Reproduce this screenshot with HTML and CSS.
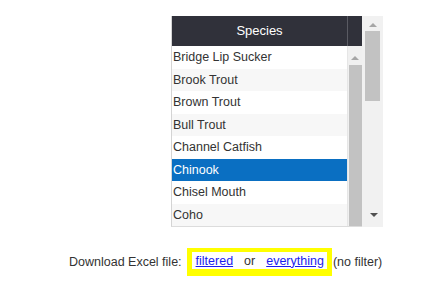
FILE: index.html
```html
<!DOCTYPE html>
<html lang="en">
<head>
  <meta charset="UTF-8" />
  <title>Species download</title>
  <link rel="stylesheet" href="styles.css">
</head>
<body>
  <div class="panel">
    <div class="grid">
      <div class="head">
        <div class="head-title">Species</div>
        <div class="head-gap"></div>
      </div>
      <div class="body">
        <ul class="rows">
          <li>Bridge Lip Sucker</li>
          <li class="alt">Brook Trout</li>
          <li>Brown Trout</li>
          <li class="alt">Bull Trout</li>
          <li>Channel Catfish</li>
          <li class="selected">Chinook</li>
          <li>Chisel Mouth</li>
          <li class="alt">Coho</li>
        </ul>
        <div class="inner-bar">
          <span class="arrow up"></span>
          <div class="inner-thumb"></div>
        </div>
      </div>
    </div>
    <div class="outer-bar">
      <span class="arrow up"></span>
      <div class="outer-thumb"></div>
      <div class="spacer"></div>
      <span class="arrow down"></span>
    </div>
  </div>

  <div class="download">
    <span class="label">Download Excel file:</span>
    <span class="highlight">
      <a href="#" class="first">filtered</a>
      <span class="or">or</span>
      <a href="#">everything</a>
    </span>
    <span class="note">(no filter)</span>
  </div>
</body>
</html>
```

FILE: styles.css
```css
body {
  margin: 0;
  background: #fff;
  font-family: "Liberation Sans", Arial, sans-serif;
  font-size: 12.5px;
  color: #333;
}

.panel {
  display: flex;
  margin: 16px 0 0 171px;
  width: 212px;
  height: 211px;
}

.grid {
  width: 190px;
  border-left: 1px solid #d4d4d4;
  border-bottom: 1px solid #dcdcdc;
}

.head {
  display: flex;
  height: 30px;
  background: #30313a;
}

.head-title {
  width: 175px;
  color: #fff;
  font-size: 13px;
  text-align: center;
  line-height: 30px;
  border-right: 1px solid #5a5b63;
}

.head-gap {
  flex: 1;
}

.body {
  display: flex;
  height: 180px;
  overflow: hidden;
}

.rows {
  list-style: none;
  margin: 0;
  padding: 0;
  width: 175px;
}

.rows li {
  height: 22.5px;
  line-height: 23px;
  padding-left: 1px;
  background: #fff;
  white-space: nowrap;
}

.rows li.alt {
  background: #f7f7f7;
}

.rows li.selected {
  background: #0a6fc2;
  color: #fff;
}

.inner-bar {
  width: 14px;
  background: #f0f0f0;
  display: flex;
  flex-direction: column;
  align-items: center;
  border-left: 1px solid #e6e6e6;
}

.inner-thumb {
  width: 13px;
  flex: 1;
  background: #c2c2c2;
  margin-top: 5px;
}

.outer-bar {
  width: 22px;
  background: #f1f1f1;
  display: flex;
  flex-direction: column;
  align-items: center;
  padding-bottom: 10px;
}

.outer-thumb {
  width: 15px;
  height: 70px;
  margin: 4px 1px 0 0;
  background: #c2c2c2;
}

.spacer {
  flex: 1;
}

.arrow {
  display: block;
  width: 0;
  height: 0;
  border-left: 4px solid transparent;
  border-right: 4px solid transparent;
}

.arrow.up {
  margin-top: 7px;
  border-bottom: 4px solid #a6a6a6;
}

.inner-bar .arrow.up {
  margin-top: 10px;
}

.arrow.down {
  border-top: 4px solid #505050;
  margin-left: 2px;
}

.download {
  display: flex;
  align-items: center;
  margin: 21px 0 0 69px;
  white-space: nowrap;
}

.label {
  margin-right: 5px;
}

.highlight {
  display: inline-flex;
  align-items: center;
  height: 17px;
  padding: 0 3px 0 4px;
  border-style: solid;
  border-color: #ffff00;
  border-width: 4px 5px 7px 5px;
  background: #fff;
}

.highlight a {
  color: #1a1aee;
  text-decoration: underline;
}

.or {
  margin: 0 11px 0 11px;
}

.note {
  margin-left: 1px;
}
```
